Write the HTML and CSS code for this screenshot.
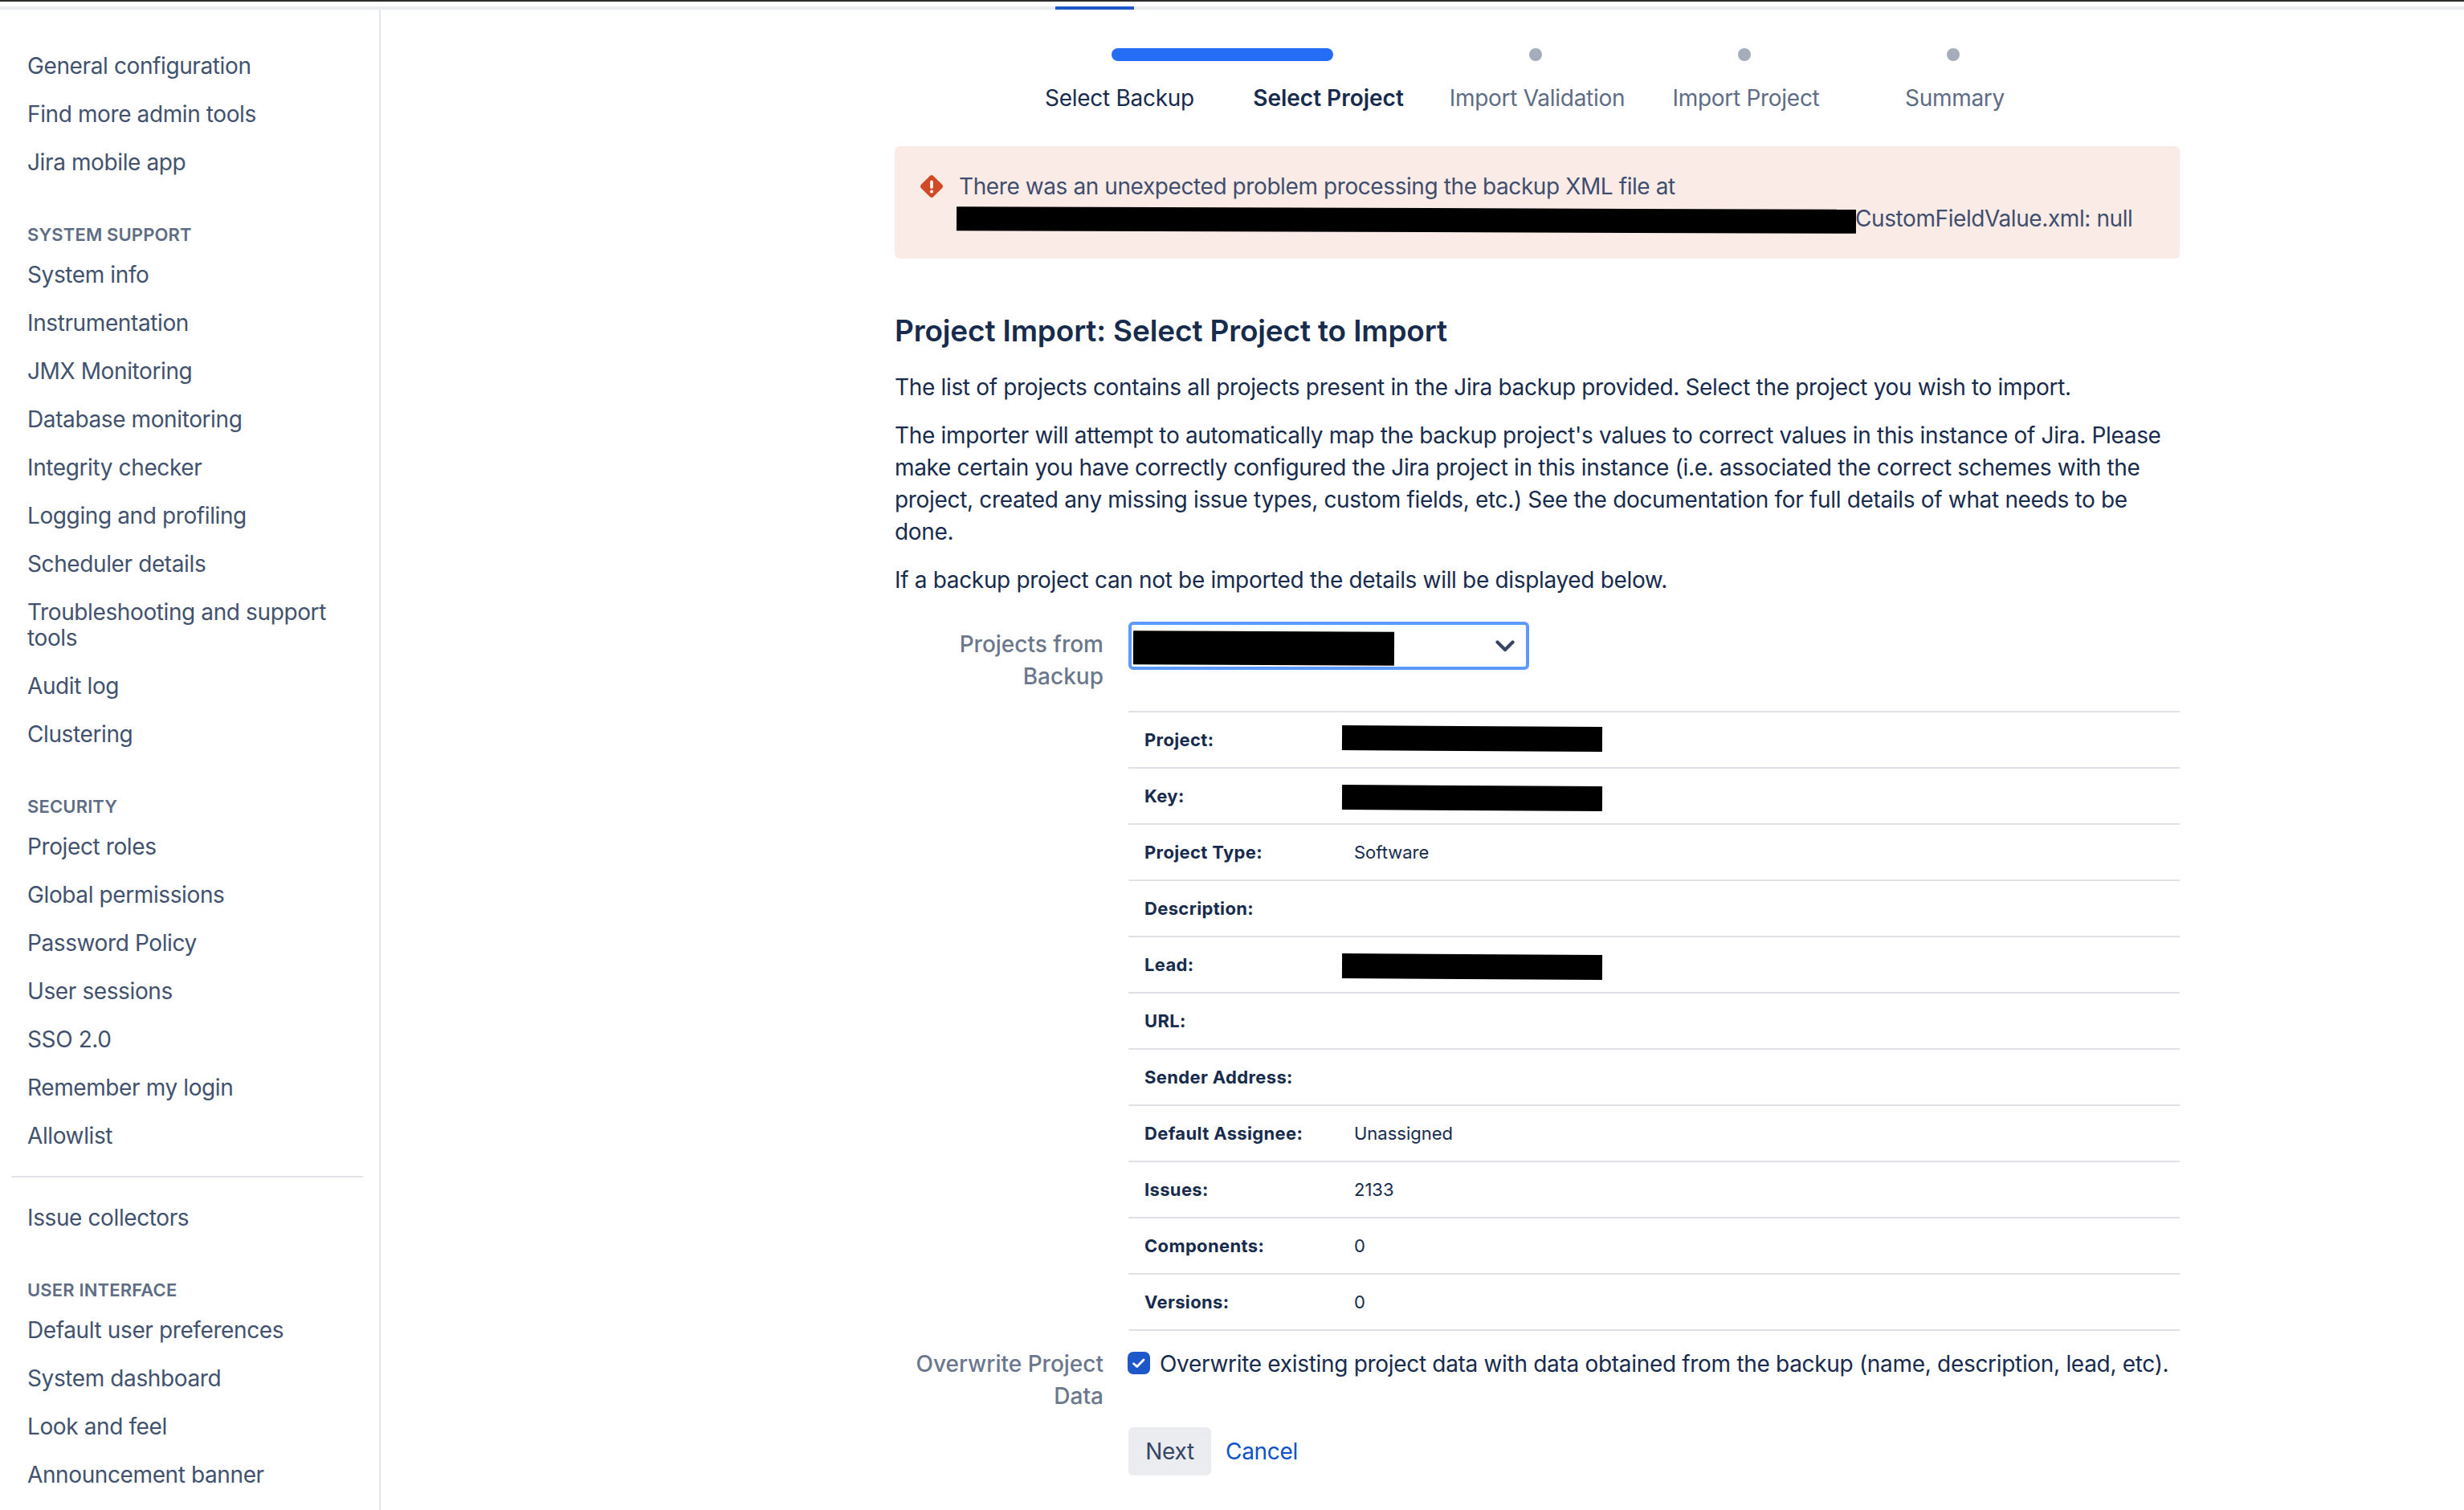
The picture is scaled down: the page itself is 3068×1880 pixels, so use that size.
FILE: index.html
```html
<!DOCTYPE html>
<html lang="en">
<head>
<meta charset="utf-8">
<title>Project Import</title>
<link rel="stylesheet" href="styles.css">
</head>
<body>
<div class="chrome-line"></div>
<div class="tabbar"><div class="tabtrack"><span class="tab-active"></span></div></div>
<div class="layout">
  <nav class="sidebar">
    <ul class="nav-list">
      <li>General configuration</li>
      <li>Find more admin tools</li>
      <li>Jira mobile app</li>
    </ul>
    <h3 class="nav-heading">System support</h3>
    <ul class="nav-list">
      <li>System info</li>
      <li>Instrumentation</li>
      <li>JMX Monitoring</li>
      <li>Database monitoring</li>
      <li>Integrity checker</li>
      <li>Logging and profiling</li>
      <li>Scheduler details</li>
      <li>Troubleshooting and support tools</li>
      <li>Audit log</li>
      <li>Clustering</li>
    </ul>
    <h3 class="nav-heading">Security</h3>
    <ul class="nav-list">
      <li>Project roles</li>
      <li>Global permissions</li>
      <li>Password Policy</li>
      <li>User sessions</li>
      <li>SSO 2.0</li>
      <li>Remember my login</li>
      <li>Allowlist</li>
    </ul>
    <hr class="nav-divider">
    <ul class="nav-list">
      <li>Issue collectors</li>
    </ul>
    <h3 class="nav-heading">User interface</h3>
    <ul class="nav-list">
      <li>Default user preferences</li>
      <li>System dashboard</li>
      <li>Look and feel</li>
      <li>Announcement banner</li>
    </ul>
  </nav>
  <main class="main">
    <div class="steps">
      <span class="step-bar"></span>
      <span class="step-dot"></span>
      <span class="step-dot"></span>
      <span class="step-dot"></span>
      <span class="step-label step-done">Select Backup</span>
      <span class="step-label step-current">Select Project</span>
      <span class="step-label">Import Validation</span>
      <span class="step-label">Import Project</span>
      <span class="step-label">Summary</span>
    </div>
    <div class="alert">
      <svg class="alert-icon" viewBox="0 0 28 28" aria-hidden="true">
        <path fill="#cf4a25" d="M11.6 1.2a3.4 3.4 0 0 1 4.8 0l10.4 10.4a3.4 3.4 0 0 1 0 4.8L16.4 26.8a3.4 3.4 0 0 1-4.8 0L1.2 16.4a3.4 3.4 0 0 1 0-4.8z"/>
        <rect x="12.2" y="6.5" width="3.6" height="10.5" rx="1.8" fill="#fff"/>
        <circle cx="14" cy="20.5" r="2" fill="#fff"/>
      </svg>
      <div class="alert-text">
        There was an unexpected problem processing the backup XML file at<br>
        <span class="redact redact-path"></span>CustomFieldValue.xml: null
      </div>
    </div>
    <h2 class="title">Project Import: Select Project to Import</h2>
    <p class="para">The list of projects contains all projects present in the Jira backup provided. Select the project you wish to import.</p>
    <p class="para">The importer will attempt to automatically map the backup project's values to correct values in this instance of Jira. Please make certain you have correctly configured the Jira project in this instance (i.e. associated the correct schemes with the project, created any missing issue types, custom fields, etc.) See the documentation for full details of what needs to be done.</p>
    <p class="para">If a backup project can not be imported the details will be displayed below.</p>
    <div class="form-row form-row-select">
      <label class="form-label">Projects from Backup</label>
      <div class="select">
        <span class="redact redact-select"></span>
        <svg class="chevron" viewBox="0 0 24 16" aria-hidden="true"><path d="M2.5 3.5l9.5 9.5 9.5-9.5" fill="none" stroke="#344563" stroke-width="4.2" stroke-linecap="round" stroke-linejoin="round"/></svg>
      </div>
    </div>
    <div class="form-row">
      <span></span>
      <table class="details">
        <tr><th>Project:</th><td><span class="redact redact-cell redact-raised"></span></td></tr>
        <tr><th>Key:</th><td><span class="redact redact-cell"></span></td></tr>
        <tr><th>Project Type:</th><td>Software</td></tr>
        <tr><th>Description:</th><td></td></tr>
        <tr><th>Lead:</th><td><span class="redact redact-cell"></span></td></tr>
        <tr><th>URL:</th><td></td></tr>
        <tr><th>Sender Address:</th><td></td></tr>
        <tr><th>Default Assignee:</th><td>Unassigned</td></tr>
        <tr><th>Issues:</th><td>2133</td></tr>
        <tr><th>Components:</th><td>0</td></tr>
        <tr><th>Versions:</th><td>0</td></tr>
      </table>
    </div>
    <div class="form-row form-row-check">
      <label class="form-label">Overwrite Project Data</label>
      <div class="check-line">
        <svg class="checkbox" viewBox="0 0 28 28" aria-hidden="true">
          <rect width="28" height="28" rx="7" fill="#1d57c9"/>
          <path d="M7.5 14.8l4.2 3.6L20 10" fill="none" stroke="#fff" stroke-width="2.8" stroke-linecap="round" stroke-linejoin="round"/>
        </svg>
        <span>Overwrite existing project data with data obtained from the backup (name, description, lead, etc).</span>
      </div>
    </div>
    <div class="form-row form-row-actions">
      <span></span>
      <div class="actions">
        <button class="btn" type="button">Next</button>
        <a class="cancel">Cancel</a>
      </div>
    </div>
  </main>
</div>
</body>
</html>
```
FILE: styles.css
```css
* { box-sizing: border-box; }
html, body { margin: 0; padding: 0; }
body {
  width: 3068px;
  height: 1880px;
  overflow: hidden;
  background: #fff;
  font-family: Inter, "Liberation Sans", sans-serif;
  font-size: 28px;
  line-height: 40px;
  letter-spacing: -0.29px;
  color: #172b4d;
}
.chrome-line { height: 2px; background: #2b2b2b; }
.tabbar { height: 10px; padding-top: 6px; }
.tabtrack { height: 4px; padding-left: 1314px; background: #ebecf0; }
.tab-active { display: block; width: 98px; height: 4px; background: #1d57c9; }
.layout { display: flex; height: 1868px; }
.sidebar {
  flex: 0 0 474px;
  border-right: 2px solid #e4e5e9;
  padding: 40px 20px 0 14px;
  color: #42526e;
  letter-spacing: -0.39px;
}
.nav-list { list-style: none; margin: 0; padding: 0; }
.nav-list li { padding: 14px 0 14px 20px; line-height: 32px; }
.nav-heading {
  margin: 40px 0 0;
  padding-left: 20px;
  font-size: 22px;
  line-height: 40px;
  font-weight: 600;
  letter-spacing: 0.15px;
  text-transform: uppercase;
  color: #5e6c84;
}
.nav-divider { border: 0; height: 2px; margin: 20px 0; background: #e1e3e8; }
.main { flex: 0 0 1600px; margin-left: 640px; }
.steps {
  display: grid;
  grid-template-columns: repeat(5, 260px);
  row-gap: 26px;
  justify-items: center;
  padding: 48px 0 0 148px;
}
.step-bar { grid-column: 1 / 3; justify-self: stretch; height: 16px; margin: 0 122px; border-radius: 8px; background: #266df5; }
.step-dot { width: 16px; height: 16px; border-radius: 50%; background: #a5adba; }
.step-label { padding-left: 4px; color: #5e6c84; white-space: nowrap; }
.step-done { color: #172b4d; }
.step-current { color: #172b4d; font-weight: 600; letter-spacing: 0; }
.alert {
  display: flex;
  gap: 20px;
  margin-top: 40px;
  padding: 30px 32px;
  height: 140px;
  border-radius: 6px;
  background: #fbebe7;
  color: #3f4e6d;
  letter-spacing: -0.41px;
}
.alert-icon { flex: 0 0 28px; width: 28px; height: 28px; margin-top: 6px; }
.alert-text { white-space: nowrap; }
.redact { display: inline-block; background: #000; vertical-align: middle; }
.redact-path { width: 1120px; height: 30px; margin: 0 -1px 0 -3px; transform: rotate(.19deg); }
.title { margin: 70px 0 30px; font-size: 37px; line-height: 40px; font-weight: 600; letter-spacing: -0.15px; }
.para { margin: 0 0 20px; letter-spacing: -0.33px; }
.form-row { display: grid; grid-template-columns: 260px 1309px; column-gap: 31px; }
.form-row-select { margin-top: 32px; }
.form-label { text-align: right; color: #6b778c; font-weight: 500; letter-spacing: 0; }
.form-row-select .form-label { padding-top: 8px; }
.select {
  position: relative;
  width: 499px;
  height: 60px;
  border: 4px solid #5c9aff;
  border-radius: 6px;
  padding: 8px 0 0 2px;
  line-height: 0;
}
.redact-select { width: 325px; height: 42px; vertical-align: top; transform: rotate(.3deg); }
.chevron { position: absolute; right: 14px; top: 18px; width: 24px; height: 16px; }
.details { width: 100%; margin-top: 23px; border-collapse: collapse; border-top: 2px solid #dfe1e6; font-size: 22px; letter-spacing: 0; }
.details tr { height: 70px; border-bottom: 2px solid #dfe1e6; }
.details th { width: 281px; padding: 0 0 0 20px; text-align: left; font-weight: 700; letter-spacing: 0.35px; }
.details td { padding: 0; }
.redact-cell { width: 324px; height: 31px; margin-left: -15px; transform: rotate(.35deg); }
.redact-raised { transform: translateY(-4px) rotate(.35deg); }
.form-row-check { margin-top: 21px; }
.check-line { display: flex; align-items: flex-start; gap: 12px; margin-left: -1px; white-space: nowrap; letter-spacing: -0.31px; }
.checkbox { flex: 0 0 28px; width: 28px; height: 28px; margin-top: 5px; }
.form-row-actions { margin-top: 19px; }
.actions { display: flex; align-items: center; gap: 18px; }
.btn {
  width: 103px;
  height: 60px;
  padding: 0;
  border: 0;
  border-radius: 6px;
  background: #ebecf0;
  font: inherit;
  letter-spacing: inherit;
  color: #344563;
}
.cancel { color: #0c52c9; }
```
